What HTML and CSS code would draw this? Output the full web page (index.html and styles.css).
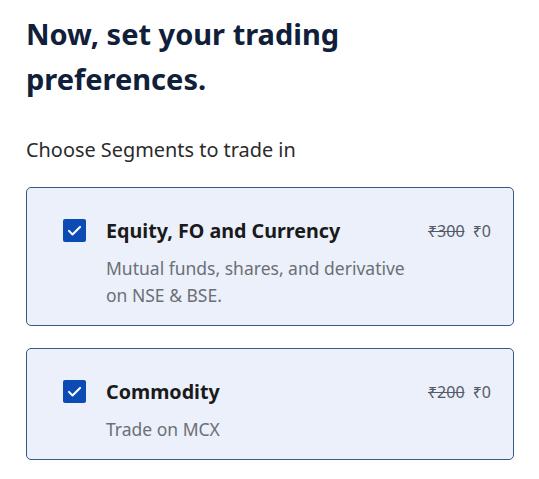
FILE: index.html
```html
<!DOCTYPE html>
<html>
<head>
<meta charset="utf-8">
<link rel="stylesheet" href="styles.css">
</head>
<body>
<main class="page">
  <h1 class="title">Now, set your trading preferences.</h1>
  <p class="label">Choose Segments to trade in</p>
  <div class="cards">
    <div class="card">
      <span class="check"><svg viewBox="0 0 24 24" width="19" height="19"><path d="M5 12.5l4.5 4.5 9.5-9.5" fill="none" stroke="#fff" stroke-width="2.6" stroke-linecap="round" stroke-linejoin="round"/></svg></span>
      <div class="body">
        <div class="head">
          <span class="name">Equity, FO and Currency</span>
          <span class="price"><s>₹300</s> ₹0</span>
        </div>
        <p class="desc">Mutual funds, shares, and derivative<br>on NSE &amp; BSE.</p>
      </div>
    </div>
    <div class="card">
      <span class="check"><svg viewBox="0 0 24 24" width="19" height="19"><path d="M5 12.5l4.5 4.5 9.5-9.5" fill="none" stroke="#fff" stroke-width="2.6" stroke-linecap="round" stroke-linejoin="round"/></svg></span>
      <div class="body">
        <div class="head">
          <span class="name">Commodity</span>
          <span class="price"><s>₹200</s> ₹0</span>
        </div>
        <p class="desc">Trade on MCX</p>
      </div>
    </div>
  </div>
</main>
</body>
</html>
```

FILE: styles.css
```css
* { box-sizing: border-box; }
html, body { margin: 0; padding: 0; background: #ffffff; }
body { font-family: "Noto Sans", "Open Sans", sans-serif; color: #1b1b1b; }
.page { padding: 11px 25px 0 26px; width: 539px; }
.title {
  margin: 0;
  font-size: 29px;
  line-height: 45px;
  font-weight: 700;
  color: #10203a;
  width: 330px;
}
.label {
  margin: 36px 0 0;
  font-size: 19.9px;
  line-height: 26px;
  color: #2b2b2b;
}
.cards { display: flex; flex-direction: column; gap: 22px; margin-top: 24px; }
.card {
  display: flex;
  align-items: flex-start;
  gap: 20px;
  background: #ebf0fa;
  border: 1.6px solid #385887;
  border-radius: 5px;
  padding: 31px 22px 16px 36px;
}
.check {
  flex: none;
  width: 23px; height: 23px;
  background: #0d4bb4;
  border-radius: 2px;
  display: flex; align-items: center; justify-content: center;
}
.body { flex: 1; }
.head { display: flex; justify-content: space-between; align-items: center; height: 24px; }
.name { font-size: 19.7px; font-weight: 700; color: #1a1a1a; line-height: 24px; }
.price { font-size: 16px; color: #555b66; line-height: 24px; }
.price s { color: #555b66; margin-right: 4px; }
.desc {
  margin: 12px 0 0;
  font-size: 17.5px;
  line-height: 27px;
  color: #6b6f76;
}
```
